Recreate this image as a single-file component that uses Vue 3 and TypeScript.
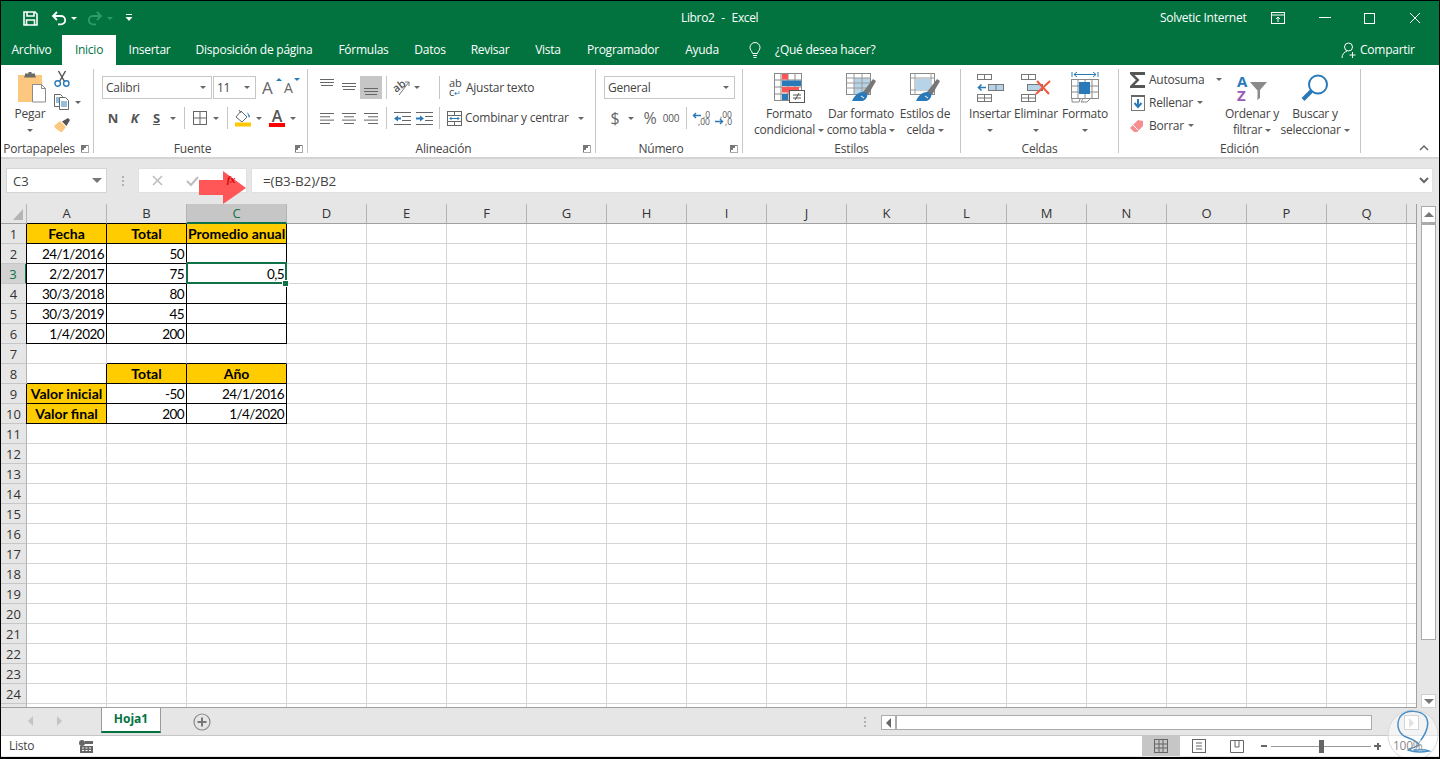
<script setup lang="ts">
interface Cell { t: string; k: string }
interface Tab { label: string; w: number; on?: boolean }

const tabs: Tab[] = [
  { label: 'Archivo', w: 61 },
  { label: 'Inicio', w: 54, on: true },
  { label: 'Insertar', w: 67 },
  { label: 'Disposición de página', w: 142 },
  { label: 'Fórmulas', w: 77 },
  { label: 'Datos', w: 56 },
  { label: 'Revisar', w: 64 },
  { label: 'Vista', w: 52 },
  { label: 'Programador', w: 98 },
  { label: 'Ayuda', w: 60 }
]

const cols = ['A', 'B', 'C', 'D', 'E', 'F', 'G', 'H', 'I', 'J', 'K', 'L', 'M', 'N', 'O', 'P', 'Q', '']

const empty: Cell = { t: '', k: '' }
const hd = (t: string): Cell => ({ t, k: 'hd' })
const box = (t: string): Cell => ({ t, k: 'box' })
const under: Cell = { t: '', k: 'under' }

const data: Record<number, Cell[]> = {
  1: [hd('Fecha'), hd('Total'), hd('Promedio anual')],
  2: [box('24/1/2016'), box('50'), box('')],
  3: [box('2/2/2017'), box('75'), { t: '0,5', k: 'box sel' }],
  4: [box('30/3/2018'), box('80'), box('')],
  5: [box('30/3/2019'), box('45'), box('')],
  6: [box('1/4/2020'), box('200'), box('')],
  7: [empty, under, under],
  8: [{ t: '', k: 'under rb' }, hd('Total'), hd('Año')],
  9: [hd('Valor inicial'), box('-50'), box('24/1/2016')],
  10: [hd('Valor final'), box('200'), box('1/4/2020')]
}

const rows = Array.from({ length: 25 }, (_, i) => {
  const n = i + 1
  const cells = cols.map((c, j) => {
    const d = data[n]?.[j] ?? empty
    const first = j === 0 && d.k !== '' && !d.k.includes('under')
    return { t: d.t, k: d.k, first, narrow: c === '', wide: c === 'C' }
  })
  return { n, cells }
})
</script>

<template>
  <div class="win">
    <header class="titlebar">
      <div class="qat">
        <svg class="q-save" width="15" height="15" viewBox="0 0 15 15" fill="none" stroke="#fff" stroke-width="1.6"><path d="M1 1h11l2 2v11H1z"/><path d="M4 1v4h7V1"/><path d="M3.5 14V9h8v5"/></svg>
        <svg class="q-undo" width="15" height="14" viewBox="0 0 15 14" fill="none" stroke="#fff" stroke-width="1.8"><path d="M5 1L1 5l4 4"/><path d="M1.5 5H9a4.2 4.2 0 0 1 0 8.4H6"/></svg>
        <i class="caret white q-c1"></i>
        <svg class="q-redo" width="15" height="14" viewBox="0 0 15 14" fill="none" stroke="#2f9a6b" stroke-width="1.8"><path d="M10 1l4 4-4 4"/><path d="M13.500 5H6a4.2 4.2 0 0 0 0 8.400h3"/></svg>
        <i class="caret dim q-c2"></i>
        <svg class="q-more" width="8" height="8" viewBox="0 0 8 8" fill="#fff"><rect x="1" y="0" width="6" height="1"/><path d="M0.500 3h7L4 7z"/></svg>
      </div>
      <div class="title">Libro2 - Excel</div>
      <div class="user">Solvetic Internet</div>
      <svg class="ropt" width="14" height="12" viewBox="0 0 14 12" fill="none" stroke="#fff"><rect x="0.500" y="0.500" width="13" height="11"/><path d="M1 3h12"/><path d="M7 10V5M5 7l2-2 2 2"/></svg>
      <svg class="wmin" width="12" height="2" viewBox="0 0 12 2"><rect width="12" height="1" fill="#fff"/></svg>
      <svg class="wmax" width="11" height="11" viewBox="0 0 11 11" fill="none" stroke="#fff"><rect x="0.500" y="0.500" width="10" height="10"/></svg>
      <svg class="wclose" width="12" height="12" viewBox="0 0 12 12" stroke="#fff"><path d="M1 1l10 10M11 1L1 11"/></svg>
    </header>

    <nav class="tabs">
      <div v-for="t in tabs" :key="t.label" class="tab" :class="{ on: t.on }" :style="{ width: t.w + 'px' }">{{ t.label }}</div>
      <svg class="bulb" width="12" height="17" viewBox="0 0 12 17" fill="none" stroke="#fff"><path d="M3.500 11.500C3 9 1 8 1 5.500a5 5 0 0 1 10 0C11 8 9 9 8.500 11.500z"/><path d="M4 13.500h4M4.500 15.500h3"/></svg>
      <div class="ask">¿Qué desea hacer?</div>
      <svg class="share-i" width="16" height="17" viewBox="0 0 16 17" fill="none" stroke="#fff"><circle cx="7.500" cy="5" r="4"/><path d="M1 16c0-4 2.500-6 5-7M9.500 9.500"/><path d="M11.500 10v6M8.500 13h6"/></svg>
      <div class="share">Compartir</div>
    </nav>

    <section class="ribbon">
      <div class="group g1">
        <div class="body clip">
          <div class="bigbtn paste">
            <div class="bigicon">
              <svg class="paste-i" width="28" height="31" viewBox="0 0 28 31"><rect x="0" y="3" width="24" height="27" fill="#fcc77e"/><path d="M7 3V1.500h3.500V0h3v1.500H17V3l1 2.500H6z" fill="#6b6b6b"/><path d="M14.500 12.500h9l4 4v13.500h-13z" fill="#fff" stroke="#8a8a8a"/><path d="M23.500 12.500v4h4" fill="none" stroke="#8a8a8a"/></svg>
            </div>
            <div class="ln">Pegar</div>
            <div class="ln"><i class="caret"></i></div>
          </div>
          <div class="clipcol">
            <div class="cliprow">
              <svg width="16" height="16" viewBox="0 0 16 16" fill="none"><path d="M4.500 0l6 10.500M11.500 0L5.500 10.500" stroke="#555" stroke-width="1.500"/><circle cx="3.700" cy="12.500" r="2.700" stroke="#2a7ab9" stroke-width="1.400"/><circle cx="12.300" cy="12.500" r="2.700" stroke="#2a7ab9" stroke-width="1.400"/></svg>
            </div>
            <div class="cliprow">
              <svg width="16" height="16" viewBox="0 0 16 16" fill="#fff" stroke="#666"><path d="M0.500 0.500h6l2 2v10h-8z"/><path d="M5.500 3.500h6l3 3v9h-9z"/><path d="M7 8h6M7 10h6M7 12h6" stroke="#2a7ab9"/><path d="M2 4h3M2 6h3M2 8h3" stroke="#2a7ab9"/></svg>
              <i class="caret c-copy"></i>
            </div>
            <div class="cliprow">
              <svg width="16" height="15" viewBox="0 0 16 15"><path d="M0 8l6-5 6 6-4 5H6l-1-2-1 1-1-2-1 0z" fill="#fcc77e"/><path d="M8 3.500l6-3.500 2 2-3.500 6z" fill="#555"/></svg>
            </div>
          </div>
        </div>
        <div class="glabel">Portapapeles<i class="launcher"></i></div>
      </div>

      <div class="group g2">
        <div class="body col">
          <div class="combos">
            <div class="combo fontname"><span>Calibri</span><i class="caret"></i></div>
            <div class="combo fontsize"><span>11</span><i class="caret"></i></div>
            <div class="growa big">A<i class="up"></i></div>
            <div class="growa small">A<i class="down"></i></div>
          </div>
          <div class="font2">
            <b class="bt">N</b>
            <b class="bt it">K</b>
            <b class="bt un">S</b>
            <i class="caret"></i>
            <span></span><span class="sep"></span><span></span>
            <svg class="ic" width="14" height="14" viewBox="0 0 14 14" fill="none" stroke="#666"><rect x="0.500" y="0.500" width="13" height="13"/><path d="M7 0v14M0 7h14"/></svg>
            <i class="caret"></i>
            <span></span><span class="sep"></span><span></span>
            <svg class="ic" width="18" height="17" viewBox="0 0 18 17"><path d="M7 1l6 6-5 5-6-5z" fill="#fff" stroke="#666"/><path d="M13 2l3 4-1 2z" fill="#2a7ab9"/><path d="M5 0l2 3" stroke="#666"/><rect x="1" y="12.500" width="16" height="4" fill="#ffc800"/></svg>
            <i class="caret"></i>
            <span></span>
            <div class="fcolor"><span>A</span><i></i></div>
            <i class="caret"></i>
          </div>
        </div>
        <div class="glabel">Fuente<i class="launcher"></i></div>
      </div>

      <div class="group g3">
        <div class="body col">
          <div class="al1">
            <svg class="ic atop" width="14" height="7" viewBox="0 0 14 7" fill="#666"><rect width="14" height="1"/><rect y="3" width="14" height="1"/><rect x="1" y="6" width="12" height="1"/></svg>
            <svg class="ic amid" width="14" height="7" viewBox="0 0 14 7" fill="#666"><rect width="14" height="1"/><rect y="3" width="14" height="1"/><rect x="1" y="6" width="12" height="1"/></svg>
            <div class="alon"><svg width="14" height="7" viewBox="0 0 14 7" fill="#666"><rect width="14" height="1"/><rect y="3" width="14" height="1"/><rect x="1" y="6" width="12" height="1"/></svg></div>
            <span></span><span class="sep"></span><span></span>
            <svg class="ic" width="18" height="17" viewBox="0 0 18 17"><text x="0" y="11" transform="rotate(-38 6 8)" font-size="11" font-weight="600" fill="#555" class="svgt">ab</text><path d="M6 16L16 3M12 3h4v4" fill="none" stroke="#777"/></svg>
            <i class="caret"></i>
            <span></span><span class="sep"></span>
            <div class="tool">
              <div class="wrap-i"><span>ab</span><span>c<em>↵</em></span></div>
              <span class="lbl">Ajustar texto</span>
            </div>
          </div>
          <div class="al2">
            <svg class="ic" width="14" height="11" viewBox="0 0 14 11" fill="#666"><rect width="14" height="1"/><rect y="3.300" width="10" height="1"/><rect y="6.600" width="14" height="1"/><rect y="10" width="10" height="1"/></svg>
            <svg class="ic" width="14" height="11" viewBox="0 0 14 11" fill="#666"><rect width="14" height="1"/><rect x="2" y="3.300" width="10" height="1"/><rect y="6.600" width="14" height="1"/><rect x="2" y="10" width="10" height="1"/></svg>
            <svg class="ic" width="14" height="11" viewBox="0 0 14 11" fill="#666"><rect width="14" height="1"/><rect x="4" y="3.300" width="10" height="1"/><rect y="6.600" width="14" height="1"/><rect x="4" y="10" width="10" height="1"/></svg>
            <span></span><span class="sep"></span><span></span>
            <svg class="ic" width="17" height="13" viewBox="0 0 17 13"><g fill="#666"><rect width="17" height="1"/><rect x="8" y="4" width="9" height="1"/><rect x="8" y="8" width="9" height="1"/><rect y="12" width="17" height="1"/></g><path d="M0 6.500l4-3v2h3v2H4v2z" fill="#2a7ab9"/></svg>
            <svg class="ic" width="17" height="13" viewBox="0 0 17 13"><g fill="#666"><rect width="17" height="1"/><rect x="9" y="4" width="8" height="1"/><rect x="9" y="8" width="8" height="1"/><rect y="12" width="17" height="1"/></g><path d="M8 6.500l-4-3v2H0v2h4v2z" fill="#2a7ab9"/></svg>
            <span></span><span class="sep"></span>
            <div class="tool merge">
              <svg width="15" height="15" viewBox="0 0 15 15" fill="none" stroke="#666"><rect x="0.500" y="0.500" width="14" height="14"/><path d="M0 4.500h15M0 10.500h15M7.500 0v4M7.500 11v4"/><path d="M3 7.500h9M4.500 6L3 7.500 4.500 9M10.500 6L12 7.500 10.500 9" stroke="#2a7ab9"/></svg>
              <span class="lbl">Combinar y centrar</span>
              <i class="caret"></i>
            </div>
          </div>
        </div>
        <div class="glabel">Alineación<i class="launcher"></i></div>
      </div>

      <div class="group g4">
        <div class="body col">
          <div class="combo numfmt"><span>General</span><i class="caret"></i></div>
          <div class="num2">
            <span class="bt sym dollar">$</span>
            <i class="caret"></i>
            <span></span>
            <span class="bt sym pct">%</span>
            <span class="bt thou">000</span>
            <span></span><span class="sep"></span><span></span>
            <svg class="ic dec" width="18" height="15" viewBox="0 0 18 15"><text x="10" y="6.500" class="svgt" font-size="8.500" fill="#555">,0</text><text x="5" y="14" class="svgt" font-size="8.500" fill="#555">,00</text><path d="M0 4.500h8M3 2L0.500 4.500 3 7" fill="none" stroke="#2a7ab9" stroke-width="1.400"/></svg>
            <svg class="ic dec" width="18" height="15" viewBox="0 0 18 15"><text x="5" y="6.500" class="svgt" font-size="8.500" fill="#555">,00</text><text x="10" y="14" class="svgt" font-size="8.500" fill="#555">,0</text><path d="M0 10.500h8M5 8l2.500 2.500L5 13" fill="none" stroke="#2a7ab9" stroke-width="1.400"/></svg>
          </div>
        </div>
        <div class="glabel">Número<i class="launcher"></i></div>
      </div>

      <div class="group g5">
        <div class="body">
          <div class="bigbtn fc">
            <div class="bigicon">
              <svg width="31" height="30" viewBox="0 0 31 30"><g fill="none" stroke="#8a8a8a"><rect x="0.500" y="0.500" width="27" height="27" fill="#fff"/><path d="M7 0v28M14 0v28M21 0v28M0 7h28M0 14h28M0 21h28"/></g><rect x="8" y="1" width="6" height="5.500" fill="#f55"/><rect x="8" y="7.500" width="19" height="5.500" fill="#2a7ab9"/><rect x="8" y="14" width="17" height="5.500" fill="#f55"/><rect x="8" y="21" width="6" height="6" fill="#2a7ab9"/><rect x="15.500" y="17.500" width="15" height="12" fill="#fff" stroke="#555"/><path d="M19 22h8M19 25h8M25 20l-4 7" stroke="#555" fill="none"/></svg>
            </div>
            <div class="ln">Formato</div>
            <div class="ln">condicional <i class="caret"></i></div>
          </div>
          <div class="bigbtn ft">
            <div class="bigicon">
              <svg width="30" height="29" viewBox="0 0 30 29"><rect x="0.500" y="0.500" width="24" height="21" fill="#fff" stroke="#8a8a8a"/><rect x="8" y="5" width="16" height="16" fill="#b7d3e8"/><path d="M0 5h25M0 10h25M0 15h25M8 0v22M16 0v22" stroke="#9a9a9a" fill="none"/><path d="M17 19L27 6l3 2-8 14z" fill="#777"/><path d="M6 28c2-5 6-9 11-9 3 0 5 2 4 5-1 2-3 4-5 4z" fill="#2a7ab9"/><path d="M15 23l3 2" stroke="#fff" fill="none"/></svg>
            </div>
            <div class="ln">Dar formato</div>
            <div class="ln">como tabla <i class="caret"></i></div>
          </div>
          <div class="bigbtn fs">
            <div class="bigicon">
              <svg width="30" height="29" viewBox="0 0 30 29"><rect x="0.500" y="0.500" width="24" height="21" fill="#fff" stroke="#8a8a8a"/><path d="M5 0v22M21 0v22M0 5h25M0 17h25" stroke="#9a9a9a" fill="none"/><rect x="6" y="6" width="15" height="11" fill="#b7d3e8"/><path d="M17 19L27 6l3 2-8 14z" fill="#777"/><path d="M6 28c2-5 6-9 11-9 3 0 5 2 4 5-1 2-3 4-5 4z" fill="#2a7ab9"/><path d="M15 23l3 2" stroke="#fff" fill="none"/></svg>
            </div>
            <div class="ln">Estilos de</div>
            <div class="ln">celda <i class="caret"></i></div>
          </div>
        </div>
        <div class="glabel nol">Estilos</div>
      </div>

      <div class="group g6">
        <div class="body">
          <div class="bigbtn ci">
            <div class="bigicon">
              <svg width="27" height="28" viewBox="0 0 27 28" fill="none" stroke="#777"><rect x="0.500" y="0.500" width="14" height="5"/><path d="M7.500 0v6"/><rect x="11.500" y="10.500" width="15" height="6" fill="#b7d3e8"/><path d="M19 10v7"/><path d="M9 13.500H1.500M4.500 10.500l-3 3 3 3" stroke="#2a7ab9" stroke-width="1.600"/><rect x="0.500" y="20.500" width="14" height="7"/><path d="M7.500 20v8M0 24h15"/></svg>
            </div>
            <div class="ln">Insertar</div>
            <div class="ln"><i class="caret"></i></div>
          </div>
          <div class="bigbtn ce">
            <div class="bigicon">
              <svg width="30" height="28" viewBox="0 0 30 28" fill="none" stroke="#777"><rect x="0.500" y="0.500" width="14" height="5"/><path d="M7.500 0v6"/><rect x="6.500" y="10.500" width="15" height="6" fill="#b7d3e8"/><rect x="0.500" y="20.500" width="14" height="7"/><path d="M7.500 20v8M0 24h15"/><path d="M16 7l12 13M29 7L15 20" stroke="#f0573f" stroke-width="2"/></svg>
            </div>
            <div class="ln">Eliminar</div>
            <div class="ln"><i class="caret"></i></div>
          </div>
          <div class="bigbtn cf">
            <div class="bigicon">
              <svg width="29" height="31" viewBox="0 0 29 31" fill="none" stroke="#8a8a8a"><path d="M1 0v5M27 0v5M3 2.500h22M6 0L3 2.500 6 5M22 0l3 2.500L22 5" stroke="#2a7ab9"/><rect x="0.500" y="7.500" width="27" height="19" fill="#fff"/><path d="M7 7v20M14 7v20M21 7v20M0 14h28M0 20h28"/><rect x="8" y="10" width="11" height="12" fill="#2a7ab9" stroke="none"/><path d="M1 27v3h7l1-3M12 27l-2 3h6l3-3" /></svg>
            </div>
            <div class="ln">Formato</div>
            <div class="ln"><i class="caret"></i></div>
          </div>
        </div>
        <div class="glabel nol">Celdas</div>
      </div>

      <div class="group g7">
        <div class="body">
          <div class="editcol">
            <div class="erow">
              <svg width="16" height="16" viewBox="0 0 16 16"><path d="M0 0h15v3H4.500l5 5-5 5H15v3H0v-2l6-6-6-6z" fill="#555"/></svg>
              <span class="lbl">Autosuma</span>
              <i class="caret auto"></i>
            </div>
            <div class="erow">
              <svg width="16" height="16" viewBox="0 0 16 16"><rect x="1.500" y="1.500" width="13" height="14" fill="#fff" stroke="#777"/><rect x="1" y="0" width="14" height="2" fill="#666"/><path d="M8 4v7M4.500 8L8 12l3.500-4" fill="none" stroke="#2a7ab9" stroke-width="2"/></svg>
              <span class="lbl">Rellenar</span>
              <i class="caret"></i>
            </div>
            <div class="erow">
              <svg width="16" height="16" viewBox="0 0 16 16"><path d="M0 10l8-8 5 1 0 5-6 6H4z" fill="#f58f8f"/><path d="M3 7l5 5" stroke="#fff"/></svg>
              <span class="lbl">Borrar</span>
              <i class="caret"></i>
            </div>
          </div>
          <div class="bigbtn sortb">
            <div class="bigicon">
              <svg width="31" height="28" viewBox="0 0 31 28"><text x="0" y="13" class="svgt bold" font-size="15" fill="#2a7ab9">A</text><text x="0" y="27" class="svgt bold" font-size="15" fill="#9b59b6">Z</text><path d="M13 8h17l-7 8v8l-3 2V16z" fill="#8a8a8a"/><path d="M20 16v9" stroke="#fff"/></svg>
            </div>
            <div class="ln">Ordenar y</div>
            <div class="ln">filtrar <i class="caret"></i></div>
          </div>
          <div class="bigbtn findb">
            <div class="bigicon">
              <svg width="28" height="28" viewBox="0 0 28 28" fill="none" stroke="#2a7ab9"><circle cx="17" cy="10.500" r="9" stroke-width="2"/><path d="M10.500 17L2 25.500" stroke-width="4"/></svg>
            </div>
            <div class="ln">Buscar y</div>
            <div class="ln">seleccionar <i class="caret"></i></div>
          </div>
        </div>
        <div class="glabel nol">Edición</div>
      </div>

      <svg class="collapse" width="10" height="6" viewBox="0 0 10 6" fill="none" stroke="#666" stroke-width="1.500"><path d="M1 5l4-4 4 4"/></svg>
    </section>

    <section class="fbar">
      <div class="namebox"><span>C3</span><i class="caret big"></i></div>
      <div class="fdots"><i></i><i></i><i></i></div>
      <div class="fbtns">
        <svg width="11" height="11" viewBox="0 0 11 11" stroke="#bdbdbd" stroke-width="1.500"><path d="M1 1l9 9M10 1L1 10"/></svg>
        <svg width="13" height="10" viewBox="0 0 13 10" fill="none" stroke="#bdbdbd" stroke-width="2"><path d="M1 5l4 4 7-8"/></svg>
        <span class="fx">fx</span>
      </div>
      <div class="finput"><span>=(B3-B2)/B2</span>
        <svg width="10" height="7" viewBox="0 0 10 7" fill="none" stroke="#666" stroke-width="2"><path d="M1 1l4 4 4-4"/></svg>
      </div>
    </section>

    <main class="sheet">
      <div class="gridwrap">
        <div class="hrow">
          <div class="corner"><i></i></div>
          <div v-for="(c, i) in cols" :key="i" class="hcell" :class="{ wide: c === 'C', cur: c === 'C', narrow: c === '', blk: c === 'A' || c === 'B' }">{{ c }}</div>
        </div>
        <div v-for="r in rows" :key="r.n" class="row">
          <div class="rhead" :class="{ cur: r.n === 3 }">{{ r.n === 25 ? '' : r.n }}</div>
          <div v-for="(c, j) in r.cells" :key="j" class="cell" :class="[c.k, { first: c.first, wide: c.wide, narrow: c.narrow }]">{{ c.t }}</div>
        </div>
      </div>
      <aside class="vscroll">
        <div class="vbtn"><i class="tri-up"></i></div>
        <div class="vthumb"></div>
        <div class="vtrack"></div>
        <div class="vbtn down"><i class="caret big"></i></div>
      </aside>
    </main>

    <section class="tabbar">
      <div class="navs"><i class="tl"></i><i class="tr"></i></div>
      <div class="sheettab">Hoja1</div>
      <svg class="addsheet" width="18" height="18" viewBox="0 0 18 18" fill="none"><circle cx="9" cy="9" r="8" stroke="#8a8a8a" stroke-width="1.200"/><path d="M9 4.500v9M4.500 9h9" stroke="#777" stroke-width="2"/></svg>
      <div class="hdots"><i></i><i></i><i></i></div>
      <div class="hscroll">
        <div class="hbtn"><i class="tl dark"></i></div>
        <div class="hthumb"></div>
        <div class="htrack"></div>
        <div class="hbtn"><i class="tr"></i></div>
      </div>
    </section>

    <footer class="status">
      <span class="ready">Listo</span>
      <svg class="macro" width="14" height="13" viewBox="0 0 14 13"><circle cx="3" cy="3" r="3" fill="#666"/><path d="M6 1h8v3H6zM1 6h13v7H1z" fill="#666"/><path d="M3 8h2M6.500 8h2M10 8h2M3 10.500h2M6.500 10.500h2M10 10.500h2" stroke="#fff"/></svg>
      <div class="views">
        <div class="vw on"><svg width="14" height="14" viewBox="0 0 14 14" fill="none" stroke="#666"><rect x="0.500" y="0.500" width="13" height="13"/><path d="M5 0v14M9 0v14M0 5h14M0 9h14"/></svg></div>
        <div class="vw"><svg width="14" height="14" viewBox="0 0 14 14" fill="none" stroke="#666"><rect x="0.500" y="0.500" width="13" height="13"/><path d="M4 4h6M4 7h6M4 10h6"/></svg></div>
        <div class="vw"><svg width="14" height="13" viewBox="0 0 14 13" fill="none" stroke="#666"><path d="M0.500 0.500h13v12H0.500z"/><path d="M5 0v7h4V0" /></svg></div>
      </div>
      <div class="zoomer">
        <i class="zminus"></i>
        <div class="zline"><i></i></div>
        <i class="zplus"></i>
        <span class="zpct">100%</span>
      </div>
    </footer>

    <svg class="arrow" width="49" height="35" viewBox="0 0 49 35"><path d="M1 10h24V1l23 17-23 16v-9H1z" fill="#ff5757"/></svg>

    <svg class="logo" width="56" height="56" viewBox="0 0 56 56" fill="none">
      <circle cx="28" cy="28" r="25" fill="#fff" fill-opacity="0.5" stroke="#d8d8d8"/>
      <path d="M36 33C41 26 45 17 41 10 36 3 21 2 15 10c-4 7-2 15 4 19 6 3 13 4 15 9-4 3-10 3-11 5 5 2 12 3 21 1-5-2-11-1-15-1" stroke="#4a8fc7" stroke-width="1.500" stroke-linecap="round"/>
    </svg>
  </div>
</template>

<style scoped>
.win {
  position: relative;
  box-sizing: border-box;
  width: 1440px;
  height: 759px;
  border: 1px solid #000;
  border-bottom-width: 2px;
  background: #e6e6e6;
  overflow: hidden;
  display: flex;
  flex-direction: column;
  font: 12px/16px "Open Sans", "Noto Sans", sans-serif;
  letter-spacing: -0.25px;
  color: #444;
}
i { display: block; }
svg { overflow: visible; }
.svgt { font-family: "Open Sans", sans-serif; letter-spacing: 0; }
.bold { font-weight: 700; }
.caret {
  display: inline-block;
  width: 0;
  height: 0;
  border-left: 3.500px solid transparent;
  border-right: 3.500px solid transparent;
  border-top: 3.500px solid #666;
  vertical-align: middle;
}
.caret.white { border-top-color: #fff; }
.caret.dim { border-top-color: #2f9a6b; }
.caret.big { border-left-width: 5px; border-right-width: 5px; border-top-width: 5px; border-top-color: #777; }

/* title */
.titlebar {
  flex: none;
  height: 34px;
  background: #02733f;
  color: #fff;
  display: flex;
  align-items: center;
}
.qat { display: flex; align-items: center; width: 134px; }
.q-save { margin-left: 22px; }
.q-undo { margin-left: 14px; }
.q-c1 { margin-left: 4px; }
.q-redo { margin-left: 10px; }
.q-c2 { margin-left: 5px; }
.q-more { margin-left: 12px; }
.title { margin-left: 546px; width: 76px; white-space: nowrap; word-spacing: 4px; letter-spacing: -0.35px; }
.user { margin-left: 403px; width: 85px; white-space: nowrap; }
.ropt { margin-left: 26px; }
.wmin { margin-left: 34px; }
.wmax { margin-left: 33px; }
.wclose { margin-left: 34px; }

.tabs {
  flex: none;
  height: 30px;
  background: #02733f;
  color: #fff;
  display: flex;
  align-items: center;
}
.tab { height: 30px; line-height: 30px; text-align: center; white-space: nowrap; }
.tab.on { background: #fff; color: #02733f; }
.bulb { margin-left: 17px; }
.ask { margin-left: 14px; width: 100px; white-space: nowrap; }
.share-i { margin-left: 466px; }
.share { margin-left: 3px; white-space: nowrap; }

/* ribbon */
.ribbon {
  flex: none;
  position: relative;
  height: 92px;
  box-sizing: border-box;
  padding-top: 4px;
  background: #fff;
  display: flex;
  align-items: flex-start;
}
.group {
  flex: none;
  box-sizing: border-box;
  height: 84px;
  border-right: 1px solid #c6c6c6;
  display: flex;
  flex-direction: column;
}
.g1 { width: 93px; }
.g2 { width: 214px; }
.g3 { width: 288px; }
.g4 { width: 147px; }
.g5 { width: 218px; }
.g6 { width: 158px; }
.g7 { width: 242px; }
.body { height: 72px; display: flex; flex: none; }
.body.col { flex-direction: column; }
.glabel {
  position: relative;
  height: 16px;
  line-height: 16px;
  text-align: center;
  padding-right: 16px;
  white-space: nowrap;
  letter-spacing: -0.2px;
}
.glabel.nol { padding-right: 0; }
.launcher {
  position: absolute;
  right: 4px;
  top: 4px;
  width: 8px;
  height: 8px;
  box-sizing: border-box;
  border-left: 1px solid #aaa;
  border-top: 1px solid #aaa;
  transform: rotate(180deg);
  background: linear-gradient(135deg, #fff 50%, #777 50%);
}
.bigbtn {
  flex: none;
  display: flex;
  flex-direction: column;
  align-items: center;
}
.bigicon { height: 37px; display: flex; align-items: center; justify-content: center; }
.ln { height: 16px; line-height: 16px; white-space: nowrap; }
.ic { justify-self: center; align-self: center; }
.sep { width: 1px; background: #c6c6c6; height: 100%; }

.clip { padding-left: 5px; }
.paste { width: 48px; }
.paste-i { margin-left: 4px; }
.clipcol { display: flex; flex-direction: column; margin-top: -2px; }
.cliprow { height: 23.500px; display: flex; align-items: center; }
.c-copy { margin-left: 5px; }

.combo {
  box-sizing: border-box;
  height: 23px;
  border: 1px solid #c6c6c6;
  background: #fff;
  display: flex;
  align-items: center;
  justify-content: space-between;
  padding: 0 5px 0 3px;
}
.combos { display: flex; margin: 7px 0 0 8px; align-items: center; }
.fontname { width: 110px; }
.fontsize { width: 43px; margin-left: 1px; }
.growa { position: relative; font-size: 17px; color: #666; width: 16px; font-weight: 400; line-height: 20px; }
.growa.big { margin-left: 6px; width: 20px; }
.growa.small { margin-left: 2px; width: 16px; font-size: 14px; }
.growa .up, .growa .down { position: absolute; top: 0; right: 0; width: 0; height: 0; border-left: 3px solid transparent; border-right: 3px solid transparent; }
.growa .up { border-bottom: 3px solid #2a7ab9; }
.growa .down { border-top: 3px solid #2a7ab9; }
.font2 {
  margin: 8px 0 0 8px;
  height: 22px;
  display: grid;
  grid-template-columns: 22px 21px 23px 10px 6px 1px 3px 23px 10px 6px 1px 4px 22px 10px 2px 22px 10px;
  align-items: center;
}
.font2 > .caret, .al1 > .caret, .num2 > .caret { justify-self: center; }
.font2 .sep, .al1 .sep, .al2 .sep, .num2 .sep { align-self: stretch; }
.bt { text-align: center; font-size: 13px; color: #555; font-weight: 700; }
.bt.it { font-style: italic; }
.bt.un { text-decoration: underline; }
.fcolor { width: 16px; justify-self: center; display: flex; flex-direction: column; align-items: center; }
.fcolor span { font-size: 16px; line-height: 14px; font-weight: 600; color: #555; }
.fcolor i { width: 16px; height: 4px; background: #f00; }

.al1 {
  margin: 7px 0 0 8px;
  height: 23px;
  display: grid;
  grid-template-columns: 22px 22px 22px 4px 1px 5px 20px 10px 17px 1px 1fr;
  align-items: center;
}
.atop { align-self: start; margin-top: 3px; }
.amid { align-self: center; margin-top: -2px; }
.alon { height: 23px; background: #c6c6c6; display: flex; align-items: flex-end; justify-content: center; }
.alon svg { margin-bottom: 4px; }
.al2 {
  margin: 8px 0 0 8px;
  height: 22px;
  display: grid;
  grid-template-columns: 22px 22px 22px 4px 1px 4px 22px 22px 4px 1px 1fr;
  align-items: center;
}
.tool { display: flex; align-items: center; padding-left: 9px; white-space: nowrap; }
.tool.merge { padding-left: 7px; }
.lbl { margin-left: 3px; }
.merge .caret { margin-left: 9px; }
.wrap-i { width: 14px; font-size: 11px; line-height: 9px; color: #444; letter-spacing: 0; }
.wrap-i span { display: block; white-space: nowrap; }
.wrap-i em { font-style: normal; color: #2a7ab9; font-size: 8px; }

.numfmt { width: 131px; margin: 7px 0 0 8px; height: 23px; }
.num2 {
  margin: 8px 0 0 8px;
  height: 22px;
  display: grid;
  grid-template-columns: 22px 10px 2px 24px 18px 6px 1px 4px 22px 22px;
  align-items: center;
}
.sym { font-weight: 400; color: #666; }
.dollar, .pct { font-size: 16px; }
.thou { font-size: 10px; font-weight: 400; }

.g5 .body { padding-left: 7px; }
.fc { width: 78px; }
.ft { width: 66px; }
.fs { width: 62px; }
.g6 .body { padding-left: 7px; }
.ci { width: 44px; }
.ce { width: 48px; }
.cf { width: 50px; }
.editcol { width: 96px; margin: -1px 0 0 11px; display: flex; flex-direction: column; flex: none; }
.erow { height: 23px; display: flex; align-items: center; white-space: nowrap; }
.erow .lbl { margin-left: 3px; }
.erow .caret { margin-left: 4px; }
.erow .caret.auto { margin-left: 12px; }
.sortb { width: 52px; }
.findb { width: 74px; }
.collapse { position: absolute; left: 1418px; top: 80px; }

/* formula bar */
.fbar {
  flex: none;
  height: 47px;
  border-top: 2px solid #d4d4d4;
  box-sizing: border-box;
  padding-top: 9px;
  display: flex;
  align-items: flex-start;
}
.namebox {
  box-sizing: border-box;
  width: 101px;
  height: 25px;
  margin-left: 5px;
  background: #fff;
  border: 1px solid #d4d4d4;
  display: flex;
  align-items: center;
  justify-content: space-between;
  padding: 0 4px 0 6px;
  font-size: 13px;
  letter-spacing: 0;
}
.fdots { width: 31px; height: 25px; display: flex; flex-direction: column; align-items: center; justify-content: center; gap: 2px; flex: none; }
.fdots i { width: 2px; height: 2px; background: #b0b0b0; }
.fbtns {
  box-sizing: border-box;
  width: 109px;
  height: 25px;
  background: #fff;
  border: 1px solid #e0e0e0;
  margin-right: 4px;
  display: grid;
  grid-template-columns: 36px 35px 1fr;
  align-items: center;
  justify-items: center;
}
.fx { position: relative; z-index: 3; top: -1px; color: #d80808; font: italic 700 11px/1 "Liberation Serif", serif; padding-left: 6px; }
.finput {
  box-sizing: border-box;
  width: 1182px;
  height: 25px;
  background: #fff;
  border: 1px solid #e0e0e0;
  display: flex;
  align-items: center;
  justify-content: space-between;
  padding: 0 3px 0 11px;
  font-size: 13.500px;
  letter-spacing: -0.1px;
}

/* sheet */
.sheet { flex: none; height: 504px; display: flex; }
.gridwrap {
  flex: none;
  width: 1417px;
  box-sizing: border-box;
  border-right: 1px solid #a0a0a0;
  border-bottom: 1px solid #a0a0a0;
  overflow: hidden;
  height: 504px;
  margin-left: -1px;
  padding-left: 1px;
  font: 13.500px/21px Lato, "Open Sans", sans-serif;
  letter-spacing: -0.55px;
  color: #000;
}
.hrow { display: flex; height: 20px; }
.corner {
  flex: none;
  width: 26px;
  box-sizing: border-box;
  background: #e6e6e6;
  border-right: 1px solid #b4b4b4;
  border-bottom: 1px solid #a0a0a0;
  position: relative;
}
.corner i {
  position: absolute;
  right: 3px;
  bottom: 3px;
  width: 0;
  height: 0;
  border-left: 10px solid transparent;
  border-bottom: 11px solid #b4b4b4;
}
.hcell {
  flex: none;
  width: 80px;
  box-sizing: border-box;
  background: #e6e6e6;
  border-right: 1px solid #b4b4b4;
  border-bottom: 1px solid #a0a0a0;
  text-align: center;
  color: #333;
  font-family: "Open Sans", sans-serif;
  font-size: 13px;
  letter-spacing: 0;
  line-height: 19px;
}
.hcell.wide { width: 100px; }
.hcell.narrow { width: 10px; border-right: none; }
.hcell.blk { border-bottom-color: #000; }
.hcell.cur { background: #c6c6c6; color: #0f7145; border-bottom: 2px solid #0f7145; }
.row { display: flex; height: 20px; }
.rhead {
  flex: none;
  width: 26px;
  box-sizing: border-box;
  background: #e6e6e6;
  border-right: 1px solid #b4b4b4;
  border-bottom: 1px solid #c6c6c6;
  text-align: center;
  color: #333;
  font-family: "Open Sans", sans-serif;
  font-size: 13px;
  letter-spacing: 0;
  line-height: 20px;
}
.rhead.cur { background: #d2d2d2; color: #0f7145; border-right: 2px solid #0f7145; }
.cell {
  flex: none;
  width: 80px;
  box-sizing: border-box;
  position: relative;
  border-right: 1px solid #d4d4d4;
  border-bottom: 1px solid #d4d4d4;
  white-space: nowrap;
  overflow: visible;
  text-align: right;
  padding-right: 2px;
  background: #fff;
}
.cell.wide { width: 100px; }
.cell.narrow { width: 10px; border-right: none; }
.cell.hd {
  background: #ffcc00;
  font-size: 14px;
  line-height: 19px;
  font-weight: 700;
  text-align: center;
  padding: 0;
  border-color: #000;
  letter-spacing: 0;
}
.cell.box { border-color: #000; }
.cell.under { border-bottom-color: #000; }
.cell.rb { border-right-color: #000; }
.cell.first { box-shadow: -1px 0 0 #000; }
.cell.sel { z-index: 2; }
.cell.sel::after {
  content: "";
  position: absolute;
  top: -2px;
  left: -1px;
  right: -1px;
  bottom: -1px;
  border: 2px solid #0f7145;
  pointer-events: none;
}
.cell.sel::before {
  content: "";
  position: absolute;
  z-index: 2;
  right: -2px;
  bottom: -3px;
  width: 5px;
  height: 5px;
  background: #0f7145;
  outline: 1px solid #fff;
}

.vscroll { flex: none; width: 21px; display: flex; flex-direction: column; align-items: flex-end; padding-right: 2px; box-sizing: border-box; }
.vbtn {
  flex: none;
  box-sizing: border-box;
  width: 15px;
  height: 17px;
  margin-top: 2px;
  background: #fff;
  border: 1px solid #ababab;
  display: flex;
  align-items: center;
  justify-content: center;
}
.vbtn.down { height: 14px; margin-top: 0; border-color: #d0d0d0; }
.tri-up { width: 0; height: 0; border-left: 5px solid transparent; border-right: 5px solid transparent; border-bottom: 5px solid #777; }
.vthumb { flex: none; box-sizing: border-box; width: 15px; height: 417px; background: #fff; border: 1px solid #ababab; border-top-width: 2px; }
.vtrack { flex: 1; }

/* tab bar */
.tabbar {
  flex: none;
  height: 28px;
  box-sizing: border-box;
  border-bottom: 1px solid #c6c6c6;
  display: flex;
  align-items: flex-start;
  position: relative;
}
.navs { width: 100px; height: 27px; display: flex; align-items: center; flex: none; padding-left: 27px; box-sizing: border-box; gap: 24px; margin-top: -1px; }
.tl { width: 0; height: 0; border-top: 5px solid transparent; border-bottom: 5px solid transparent; border-right: 5px solid #c4c4c4; }
.tr { width: 0; height: 0; border-top: 5px solid transparent; border-bottom: 5px solid transparent; border-left: 5px solid #c4c4c4; }
.tl.dark { border-right-color: #666; }
.sheettab {
  box-sizing: border-box;
  flex: none;
  width: 60px;
  height: 25px;
  background: #fff;
  border-left: 1px solid #9a9a9a;
  border-right: 1px solid #9a9a9a;
  border-bottom: 2px solid #02733f;
  color: #02733f;
  font-weight: 700;
  text-align: center;
  line-height: 22px;
  letter-spacing: 0;
}
.addsheet { margin: 5px 0 0 32px; flex: none; }
.hdots { margin: 9px 0 0 653px; display: flex; flex-direction: column; gap: 2px; flex: none; }
.hdots i { width: 2px; height: 2px; background: #b0b0b0; }
.hscroll { margin: 7px 0 0 15px; height: 15px; display: flex; flex: none; width: 538px; }
.hbtn { flex: none; box-sizing: border-box; width: 15px; height: 15px; background: #fff; border: 1px solid #ababab; display: flex; align-items: center; justify-content: center; }
.hthumb { flex: none; box-sizing: border-box; width: 476px; height: 15px; background: #fff; border: 1px solid #ababab; }
.htrack { flex: 1; }

.status {
  flex: none;
  height: 20px;
  background: #fff;
  display: flex;
  align-items: center;
  position: relative;
}
.ready { margin-left: 8px; width: 70px; }
.macro { flex: none; }
.views { display: flex; margin-left: 1049px; height: 20px; }
.vw { width: 38px; height: 20px; display: flex; align-items: center; justify-content: center; }
.vw.on { background: #c6c6c6; }
.zoomer { display: flex; align-items: center; margin-left: 5px; }
.zminus { width: 6px; height: 2px; background: #666; flex: none; }
.zline { width: 100px; height: 1px; background: #999; margin-left: 4px; position: relative; flex: none; }
.zline i { position: absolute; left: 48px; top: -6px; width: 5px; height: 13px; background: #666; }
.zplus {
  width: 7px;
  height: 7px;
  margin-left: 3px;
  flex: none;
  background: linear-gradient(#666, #666) center/7px 2px no-repeat, linear-gradient(#666, #666) center/2px 7px no-repeat;
}
.zpct { position: relative; z-index: 3; margin-left: 12px; color: #8a8a8a; }

.arrow { position: absolute; left: 197px; top: 169px; z-index: 2; }
.logo { position: absolute; left: 1384px; top: 706px; }
</style>

<style>
html, body { margin: 0; padding: 0; overflow: hidden; background: #fff; }
</style>
